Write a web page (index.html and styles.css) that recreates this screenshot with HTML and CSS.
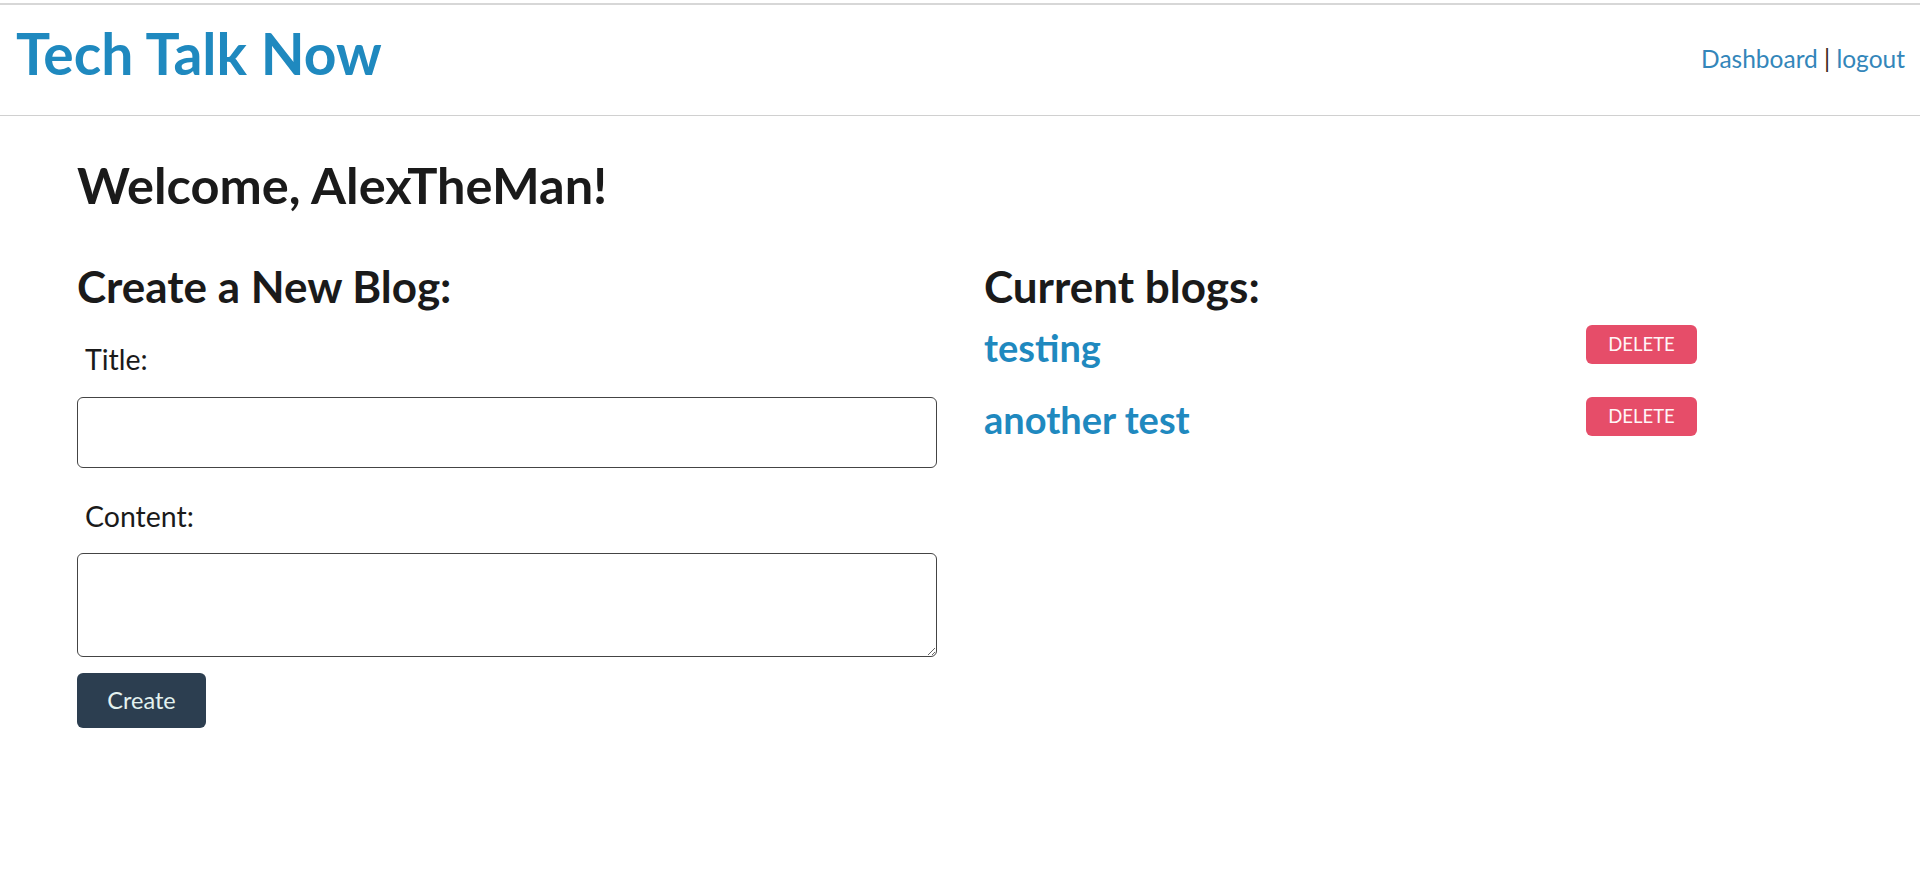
FILE: index.html
```html
<!DOCTYPE html>
<html lang="en">
<head>
<meta charset="utf-8">
<title>Tech Talk Now</title>
<link rel="stylesheet" href="styles.css">
</head>
<body>
<header class="site-header">
  <a class="brand" href="#">Tech Talk Now</a>
  <nav class="nav"><a href="#">Dashboard</a> | <a href="#">logout</a></nav>
</header>
<main class="page">
  <h1 class="welcome">Welcome, AlexTheMan!</h1>
  <div class="columns">
    <section class="create">
      <h2 class="section-title">Create a New Blog:</h2>
      <form class="blog-form">
        <label class="field-label" for="title">Title:</label>
        <input class="field-input" id="title" type="text">
        <label class="field-label" for="content">Content:</label>
        <textarea class="field-textarea" id="content"></textarea>
        <button class="btn-create" type="button">Create</button>
      </form>
    </section>
    <section class="current">
      <h2 class="section-title">Current blogs:</h2>
      <ul class="blog-list">
        <li class="blog-row">
          <a class="blog-link" href="#">testing</a>
          <button class="btn-delete" type="button">DELETE</button>
        </li>
        <li class="blog-row">
          <a class="blog-link" href="#">another test</a>
          <button class="btn-delete" type="button">DELETE</button>
        </li>
      </ul>
    </section>
  </div>
</main>
</body>
</html>
```

FILE: styles.css
```css
* { box-sizing: border-box; }

html, body {
  margin: 0;
  padding: 0;
  background: #ffffff;
}

body {
  font-family: Lato, "Open Sans", sans-serif;
  color: #1a1a1a;
  line-height: 1.2;
}

a { text-decoration: none; }

.site-header {
  margin-top: 3px;
  border-top: 2px solid #d7d7d7;
  border-bottom: 1px solid #d0d0d0;
  height: 113px;
  padding: 14px 15px 0 16px;
  display: flex;
  justify-content: space-between;
  align-items: flex-start;
}

.brand {
  font-size: 57px;
  font-weight: 700;
  color: #1f89bf;
  line-height: 1.2;
}

.nav {
  margin-top: 25px;
  font-size: 24.5px;
  color: #3a2a20;
  line-height: 1.2;
}

.nav a {
  color: #3386ba;
}

.page {
  padding: 0 77px;
}

.welcome {
  margin: 39px 0 0;
  font-size: 50.5px;
  font-weight: 700;
  line-height: 1.2;
}

.columns {
  margin-top: 44px;
  display: grid;
  grid-template-columns: 860px 860px;
  column-gap: 47px;
}

.section-title {
  margin: 0;
  font-size: 44px;
  font-weight: 700;
  line-height: 1.2;
}

.blog-form {
  display: flex;
  flex-direction: column;
  align-items: flex-start;
}

.field-label {
  margin: 30px 0 0 8px;
  font-size: 28.5px;
  line-height: 1.2;
  color: #1a1a1a;
}

.field-input,
.field-textarea {
  display: block;
  width: 860px;
  margin-top: 20px;
  border: 1px solid #444;
  border-radius: 6px;
  font-family: inherit;
  font-size: 20px;
  padding: 6px 10px;
  background: #fff;
}

.field-input { height: 71px; }

.field-textarea {
  height: 104px;
  resize: vertical;
}

.field-input + .field-label { margin-top: 31px; }

.btn-create {
  margin-top: 16px;
  width: 129px;
  height: 55px;
  border: none;
  border-radius: 6px;
  background: #2c3e50;
  color: #e3f2f0;
  font-family: inherit;
  font-size: 23.5px;
  padding: 0;
}

.blog-list {
  list-style: none;
  margin: 12.5px 0 0;
  padding: 0;
}

.blog-row {
  display: grid;
  grid-template-columns: 602px 111px;
  align-items: start;
  margin-bottom: 26.5px;
}

.blog-link {
  font-size: 38px;
  font-weight: 700;
  color: #1f89bf;
  line-height: 1.2;
}

.btn-delete {
  width: 111px;
  height: 39px;
  border: none;
  border-radius: 6px;
  background: #e64d69;
  color: #fff6f8;
  font-family: inherit;
  font-size: 18.5px;
  padding: 0;
}
```
